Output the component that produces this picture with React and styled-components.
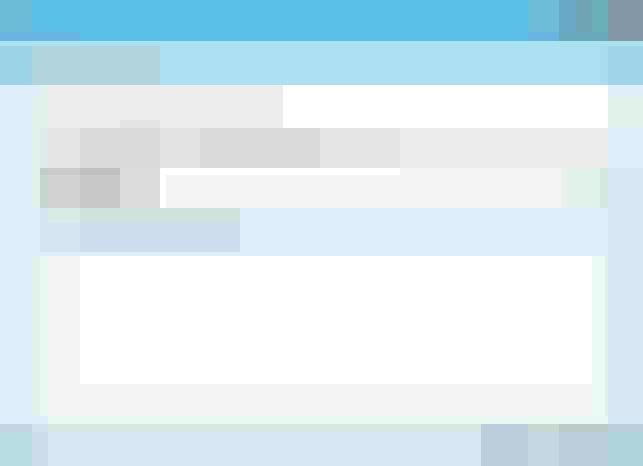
import React from 'react'
import styled, { createGlobalStyle } from 'styled-components'

const GlobalStyle = createGlobalStyle`
  html, body {
    margin: 0;
    padding: 0;
    background: #dfeefb;
    font-family: "Liberation Sans", Arial, sans-serif;
  }
`

const Window = styled.div`
  width: 643px;
  height: 466px;
  overflow: hidden;
  display: flex;
  flex-direction: column;
  background: #dfeefb;
`

const TitleBar = styled.header`
  height: 41px;
  flex: none;
  display: flex;
  justify-content: space-between;
  background: #5bc0e8;
`

const TitleCorner = styled.div`
  width: 80px;
  display: flex;
  flex-direction: column;
`

const AppIcon = styled.div`
  width: 32px;
  height: 32px;
  background: #6cbcd8;
`

const TitleEdge = styled.div`
  flex: 1;
  background: #6ab4e4;
`

const TitleButtons = styled.div`
  display: flex;
`

const TitleButton = styled.div`
  width: ${(p) => p.$w}px;
  background: linear-gradient(${(p) => p.$bg} 0 32px, ${(p) => p.$edge || p.$bg} 32px);
`

const MenuBar = styled.nav`
  height: 44px;
  box-sizing: border-box;
  flex: none;
  display: flex;
  padding: 5px 0 0;
  background: linear-gradient(#a9e4ee 0 5px, #aee0f3 5px);
`

const MenuItem = styled.div`
  width: ${(p) => p.$w}px;
  flex: ${(p) => (p.$w ? 'none' : 1)};
  background: ${(p) => p.$bg};
`

const Body = styled.main`
  flex: 1;
  min-height: 0;
  display: flex;
`

const LeftGutter = styled.aside`
  width: 40px;
  flex: none;
  display: flex;
  flex-direction: column;
  align-items: flex-end;
  padding-top: 11px;
  box-sizing: border-box;
`

const GutterStrip = styled.div`
  width: 8px;
  height: ${(p) => p.$h}px;
  flex: none;
  margin-bottom: ${(p) => p.$gap || 0}px;
  background: #e0f2ea;
`

const Panel = styled.section`
  flex: 1;
  min-width: 0;
  display: flex;
  flex-direction: column;
`

const Row = styled.div`
  height: ${(p) => p.$h}px;
  flex: none;
  display: flex;
  background: ${(p) => p.$bg || 'transparent'};
`

const Cell = styled.div`
  width: ${(p) => (p.$w ? `${p.$w}px` : 'auto')};
  flex: ${(p) => (p.$w ? 'none' : 1)};
  background: ${(p) => p.$bg};
  box-shadow: ${(p) => (p.$notch ? '0 -8px 0 #e4e4e4' : 'none')};
`

const FilterCell = styled(Cell)`
  box-shadow: ${(p) => (p.$shade ? 'inset 0 7px 0 rgba(0, 0, 0, 0.035)' : 'none')};
`

const TabCell = styled(Cell)`
  border-top: 15px solid ${(p) => p.$top};
  box-sizing: border-box;
`

const InputCell = styled(Cell)`
  position: relative;
  box-shadow: inset 6px 0 0 #ffffff;

  &::before {
    content: '';
    position: absolute;
    top: 0;
    left: 0;
    width: 240px;
    height: 7px;
    background: #ffffff;
  }
`

const Content = styled.div`
  height: 160px;
  flex: none;
  display: flex;
  background: #f4f4f4;
  margin-top: 4px;
`

const SideRail = styled.div`
  width: 40px;
  flex: none;
  border-left: 8px solid #e8f8f2;
  box-sizing: border-box;
`

const Sheet = styled.div`
  flex: 1;
  display: flex;
  flex-direction: column;
`

const SheetPage = styled.div`
  height: 128px;
  flex: none;
  background: #ffffff;
`

const RightRail = styled.div`
  width: 16px;
  flex: none;
  background: #eafaf4;
  border-right: 3px solid #dff0e8;
  box-sizing: border-box;
`

const PanelFoot = styled.div`
  flex: 1;
  margin-left: 8px;
  background: #e8f8f2;
`

const RightGutter = styled.aside`
  width: 35px;
  flex: none;
  display: flex;
  flex-direction: column;
`

const RightBand = styled.div`
  height: ${(p) => p.$h}px;
  flex: ${(p) => (p.$h ? 'none' : 1)};
  background: ${(p) => p.$bg};
`

const StatusBar = styled.footer`
  height: 42px;
  flex: none;
  display: flex;
`

const StatusPart = styled.div`
  width: ${(p) => (p.$w ? `${p.$w}px` : 'auto')};
  flex: ${(p) => (p.$w ? 'none' : 1)};
  box-sizing: border-box;
  background: ${(p) => p.$bg};
  border-top: 8px solid ${(p) => p.$top};
`

const toolbarCells = [
  { w: 8, bg: '#dfeaea' },
  { w: 32, bg: '#e5e5e5' },
  { w: 40, bg: '#dadada' },
  { w: 40, bg: '#dadada', notch: true },
  { w: 40, bg: '#e3e3e3' },
  { w: 120, bg: '#dadada' },
  { w: 80, bg: '#e5e5e5' },
  { bg: '#ececec' },
]

const filterCells = [
  { w: 8, bg: '#c6d6ce', shade: true },
  { w: 32, bg: '#d2d2d2', shade: true },
  { w: 40, bg: '#c8c8c8', shade: true },
  { w: 40, bg: '#dcdcdc' },
]

const statusParts = [
  { w: 32, bg: '#b8dde2', top: '#c4d4e2' },
  { w: 16, bg: '#ccdcea', top: '#d2e2ee' },
  { bg: '#d8e7f4', top: '#d8e8e0' },
  { w: 47, bg: '#bccddc', top: '#bccddc' },
  { w: 31, bg: '#c6d7e4', top: '#c8d8d0' },
  { w: 49, bg: '#bccddc', top: '#bccbc8' },
  { w: 35, bg: '#b0d4dc', top: '#bccddc' },
]

export default function App() {
  return (
    <Window>
      <GlobalStyle />
      <TitleBar>
        <TitleCorner>
          <AppIcon />
          <TitleEdge />
        </TitleCorner>
        <TitleButtons>
          <TitleButton $w={31} $bg="#6dbdd9" $edge="#6ab4e4" />
          <TitleButton $w={17} $bg="#6aa8c8" $edge="#6aa8bc" />
          <TitleButton $w={16} $bg="#6fa4b4" $edge="#6aa8bc" />
          <TitleButton $w={16} $bg="#6ab0b8" $edge="#6aa8bc" />
          <TitleButton $w={35} $bg="#8497a6" />
        </TitleButtons>
      </TitleBar>
      <MenuBar>
        <MenuItem $w={32} $bg="#9cd3e6" />
        <MenuItem $w={128} $bg="#b2d4dc" />
        <MenuItem $bg="#aee0f3" />
        <MenuItem $w={8} $bg="#a8dcf0" />
        <MenuItem $w={35} $bg="#a0d4e8" />
      </MenuBar>
      <Body>
        <LeftGutter>
          <GutterStrip $h={112} $gap={48} />
          <GutterStrip $h={160} />
        </LeftGutter>
        <Panel>
          <Row $h={43} $bg="#ffffff">
            <Cell $w={8} $bg="#e0f2ea" />
            <Cell $w={235} $bg="#ededed" />
          </Row>
          <Row $h={40}>
            {toolbarCells.map((cell, i) => (
              <Cell key={i} $w={cell.w} $bg={cell.bg} $notch={cell.notch} />
            ))}
          </Row>
          <Row $h={40}>
            {filterCells.map((cell, i) => (
              <FilterCell key={i} $w={cell.w} $bg={cell.bg} $shade={cell.shade} />
            ))}
            <InputCell $bg="#f4f4f4" />
            <Cell $w={6} $bg="#ebf2ee" />
            <Cell $w={33} $bg="#e0f2ea" />
            <Cell $w={8} $bg="#d4e8e0" />
          </Row>
          <Row $h={44}>
            <TabCell $w={8} $bg="#d5e5f2" $top="#d5e5f2" />
            <TabCell $w={32} $bg="#d5e5f2" $top="#d8ebe4" />
            <TabCell $w={160} $bg="#cddded" $top="#d0e2dc" />
          </Row>
          <Content>
            <SideRail />
            <Sheet>
              <SheetPage />
            </Sheet>
            <RightRail />
          </Content>
          <PanelFoot />
        </Panel>
        <RightGutter>
          <RightBand $h={11} $bg="#dfeefb" />
          <RightBand $h={32} $bg="#e0f2ea" />
          <RightBand $h={40} $bg="#dfeefb" />
          <RightBand $bg="#d8e7f4" />
        </RightGutter>
      </Body>
      <StatusBar>
        {statusParts.map((part, i) => (
          <StatusPart key={i} $w={part.w} $bg={part.bg} $top={part.top} />
        ))}
      </StatusBar>
    </Window>
  )
}
